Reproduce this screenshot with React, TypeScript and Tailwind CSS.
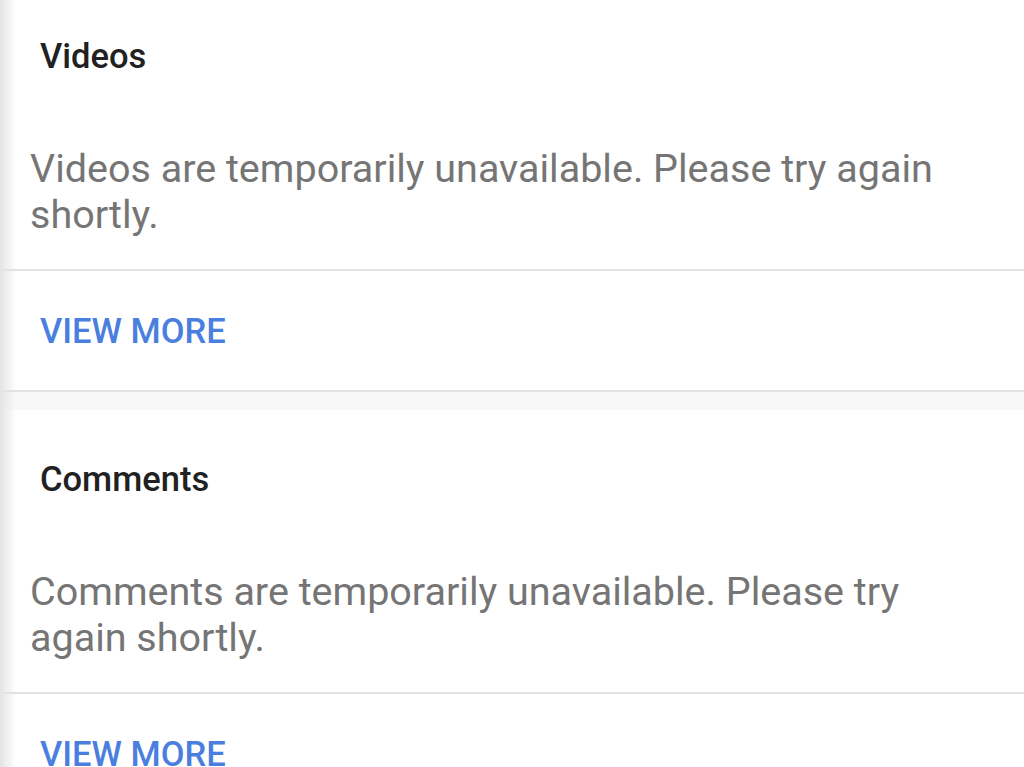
import React from "react";

type SectionProps = {
  title: string;
  body: string;
};

function Section({ title, body }: SectionProps) {
  return (
    <section>
      <div className="pt-[49px] pb-[31px]">
        <h2 className="pl-[40px] text-[34.5px] leading-[40px] font-medium text-[#212121]">{title}</h2>
        <p className="mt-[70px] pl-[30px] pr-[40px] text-[39.5px] leading-[46px] text-[#757575]">{body}</p>
      </div>
      <div className="flex h-[121px] items-center border-t-2 border-[#e2e2e2] pl-[40px]">
        <button type="button" className="text-[34.5px] leading-[40px] font-medium text-[#4a7fe0]">
          VIEW MORE
        </button>
      </div>
      <div className="h-[20px] border-t-2 border-[#e2e2e2] bg-[#f8f8f8]" />
    </section>
  );
}

export default function App() {
  return (
    <div className="relative h-[767px] overflow-hidden bg-white font-['Roboto',_'Noto_Sans',_sans-serif]">
      <div className="-mt-[13px]">
        <Section title="Videos" body="Videos are temporarily unavailable. Please try again shortly." />
        <Section title="Comments" body="Comments are temporarily unavailable. Please try again shortly." />
      </div>
      <div className="pointer-events-none absolute inset-y-0 left-0 w-[16px] bg-gradient-to-r from-[#e4e4e4] to-transparent" />
    </div>
  );
}
